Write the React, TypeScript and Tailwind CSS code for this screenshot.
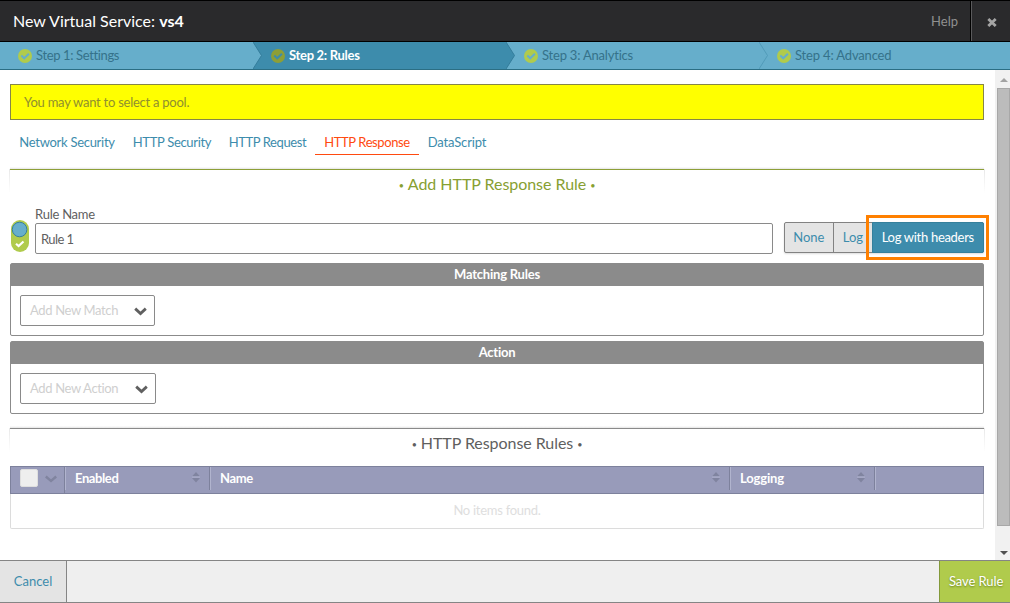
import React from "react";

const CheckBadge = ({ dim, cut }: { dim?: boolean; cut: string }) => (
  <svg width="14" height="14" viewBox="0 0 14 14" className="shrink-0">
    <circle cx="7" cy="7" r="7" fill={dim ? "#8d9f37" : "#b0cb4c"} />
    <path d="M3.3 6.5 L6.2 9.2 L10.9 4.7" fill="none" stroke={cut} strokeWidth="2.1" />
  </svg>
);

const steps = [
  { label: "Step 1: Settings", cls: "tracking-[-0.36px]" },
  { label: "Step 2: Rules", cls: "tracking-[-0.3px] text-white font-bold", active: true },
  { label: "Step 3: Analytics", cls: "tracking-[-0.2px]" },
  { label: "Step 4: Advanced", cls: "tracking-[-0.16px]" },
];

function Chevron({ fill, stroke }: { fill: string; stroke: string }) {
  return (
    <svg width="10" height="27" viewBox="0 0 10 27" className="absolute left-full top-0 z-10">
      <path d="M0 0 L8.5 13.5 L0 27 Z" fill={fill} />
      <path d="M0 0 L8.5 13.5 L0 27" fill="none" stroke={stroke} strokeWidth="1" />
    </svg>
  );
}

function SectionTitle({ children, line, text }: { children: React.ReactNode; line: string; text: string }) {
  return (
    <div className="relative h-[24px]">
      <div className="absolute -top-[2px] left-0 h-[2px] w-full bg-gradient-to-t from-[#e4e4e4] to-white" />
      <div className="absolute -left-px top-0 h-[24px] w-px bg-gradient-to-b from-[#e8e8e8] to-white" />
      <div className="absolute -right-px top-0 h-[24px] w-px bg-gradient-to-b from-[#e8e8e8] to-white" />
      <h2 className={"flex h-[24px] justify-center gap-[4px] border-t leading-[27px] whitespace-nowrap " + line + " " + text}>
        <span className="text-[9px] leading-[31px]">•</span>
        <span>{children}</span>
        <span className="text-[9px] leading-[31px]">•</span>
      </h2>
    </div>
  );
}

function Select({ label, width }: { label: string; width: string }) {
  return (
    <div className={"flex h-[31px] items-center justify-between rounded-[2px] border border-[#8a8a8a] pl-[9px] pr-[7px] text-[13px] text-[#cfcfcf] " + width}>
      <span className="whitespace-nowrap tracking-[-0.35px]">{label}</span>
      <svg width="13" height="9" viewBox="0 0 13 9" className="mt-px">
        <path d="M1.2 1.6 L6.5 6.5 L11.8 1.6" fill="none" stroke="#606060" strokeWidth="2.8" />
      </svg>
    </div>
  );
}

function Panel({ title, children }: { title: string; children: React.ReactNode }) {
  return (
    <section className="h-[73px] rounded-[2px] border border-[#8b8b8b]">
      <h3 className="h-[22px] bg-[#8b8b8b] text-center text-[13px] font-bold leading-[20px] tracking-[-0.22px] text-white">{title}</h3>
      <div className="px-[9px] pt-[9px]">{children}</div>
    </section>
  );
}

const Sort = () => (
  <svg width="8" height="11" viewBox="0 0 8 11">
    <path d="M4 0 L8 4.5 H0Z" fill="#80849f" />
    <path d="M0 6 H8 L4 10.5Z" fill="#80849f" />
    <path d="M0 5 H8" stroke="#b1b4ce" />
  </svg>
);

function HeadCell({ label, width, tracking }: { label: string; width: string; tracking: string }) {
  return (
    <div className={"flex h-[23px] shrink-0 justify-between border-l border-l-[#b1b4ce] border-r border-r-[#7d819c] pl-[9px] pr-[9px] " + width}>
      <span className={"leading-[22px] " + tracking}>{label}</span>
      <span className="pt-[5px]"><Sort /></span>
    </div>
  );
}

const tabs = [
  { label: "Network Security", cls: "w-[114px] tracking-[-0.28px] text-[#3d8cac]" },
  { label: "HTTP Security", cls: "w-[96px] tracking-[-0.32px] text-[#3d8cac]" },
  { label: "HTTP Request", cls: "w-[95px] tracking-[-0.4px] text-[#3d8cac]" },
  { label: "HTTP Response", cls: "w-[104px] border-b border-[#ff4a10] tracking-[-0.4px] text-[#ff4a10]" },
  { label: "DataScript", cls: "w-[76px] tracking-[-0.15px] text-[#3d8cac]" },
];

export default function App() {
  return (
    <div className="flex h-[603px] w-[1010px] flex-col overflow-hidden bg-white font-['Lato',sans-serif] text-[13px] text-[#5f5f5f]">
      <header className="flex h-[42px] shrink-0 border-y border-black bg-[#2a2a2c]">
        <h1 className="flex-1 whitespace-nowrap pl-[13px] text-[16px] leading-[39px] text-white">
          New Virtual Service: <b>vs4</b>
        </h1>
        <span className="pr-[12px] leading-[40px] text-[#909090]">Help</span>
        <div className="flex w-[40px] items-center justify-center border-l border-black">
          <div className="flex h-full w-full items-center justify-center border-l border-[#5a5a5c] pl-[2px] pt-[2px]">
            <svg width="10" height="9" viewBox="0 0 10 9">
              <path d="M1.3 1 L8.7 8 M8.7 1 L1.3 8" stroke="#a4a4a4" strokeWidth="2.8" />
            </svg>
          </div>
        </div>
      </header>
      <nav className="flex h-[28px] shrink-0 border-b border-[#2b6e84] bg-[#66aecb]">
        {steps.map((s, i) => (
          <div key={s.label} className={"relative flex h-[27px] w-[253px] shrink-0 items-center gap-[4px] pl-[18px] text-[#35728a] " + (s.active ? "bg-[#3d8cac]" : "bg-[#66aecb]")}>
            <CheckBadge dim={s.active} cut={s.active ? "#3d8cac" : "#66aecb"} />
            <span className={"whitespace-nowrap " + s.cls}>{s.label}</span>
            {i < 3 && <Chevron fill={s.active ? "#3d8cac" : "#66aecb"} stroke={i === 2 ? "#529bb9" : "#347d9b"} />}
          </div>
        ))}
      </nav>
      <div className="flex h-[490px] shrink-0">
        <main className="w-[995px] pl-[10px] pr-[11px] pt-[14px]">
          <div className="h-[36px] border border-[#868647] bg-[#ffff00] pl-[13px] leading-[34px] text-[#8f8f2f]">
            <span className="tracking-[-0.25px]">You may want to select a pool.</span>
          </div>
          <div className="flex h-[49px] pt-[8px]">
            {tabs.map((t) => (
              <span key={t.label} className={"h-[27px] whitespace-nowrap text-center leading-[28px] " + t.cls}>{t.label}</span>
            ))}
          </div>
          <SectionTitle line="border-[#8d9f37]" text="text-[16px] text-[#87a032] tracking-[-0.04px]">Add HTTP Response Rule</SectionTitle>
          <div className="relative flex h-[70px]">
            <div className="ml-px mt-[27px] h-[32px] w-[18px]">
              <svg width="18" height="32" viewBox="0 0 18 32">
                <rect width="18" height="32" rx="9" fill="#b0cb4c" />
                <circle cx="8.6" cy="9.5" r="7.3" fill="#66aecb" stroke="#377f9b" />
                <path d="M5 23.7 L7.6 26 L12.5 21.5" fill="none" stroke="#fff" strokeWidth="2.2" />
              </svg>
            </div>
            <div className="ml-[6px] w-[738px] pt-[13px]">
              <div className="h-[17px] leading-[17px] tracking-[-0.25px]">Rule Name</div>
              <div className="h-[31px] rounded-[2px] border border-[#8a8a8a] pl-[5px] leading-[30px] tracking-[-0.6px]">Rule 1</div>
            </div>
            <div className="ml-[11px] mt-[29px] flex h-[31px] w-[200px] rounded-[2px] border border-[#828282] bg-[#e4e4e4] leading-[28px] text-[#3d8cac] shadow-[0_1px_2px_#ddd]">
              <span className="w-[49px] border-r border-[#828282] text-center">None</span>
              <span className="w-[38px] whitespace-nowrap pl-[9px]">Log</span>
              <span className="-my-px -mr-px w-[113px] whitespace-nowrap rounded-r-[2px] border border-[#35809c] bg-[#3d8cac] text-center tracking-[-0.3px] text-white">Log with headers</span>
            </div>
            <div className="absolute left-[856px] top-[22px] h-[45px] w-[123px] border-3 border-[#ff8000]" />
          </div>
          <div className="flex flex-col gap-[5px]">
            <Panel title="Matching Rules"><Select label="Add New Match" width="w-[135px]" /></Panel>
            <Panel title="Action"><Select label="Add New Action" width="w-[136px]" /></Panel>
          </div>
          <div className="h-[14px]" />
          <SectionTitle line="border-[#8a8a8a]" text="text-[16px] text-[#5f5f5f] tracking-[-0.06px]">HTTP Response Rules</SectionTitle>
          <div className="mt-[14px] flex h-[28px] border border-[#7d819c] bg-[#989bba] font-bold text-white">
            <div className="flex h-[26px] w-[54px] shrink-0 gap-[7px] border-r border-[#7d819c] pl-[9px] pt-[2px]">
              <span className="h-[18px] w-[18px] rounded-[2px] border border-[#dedede] bg-[#eeeeee]" />
              <svg width="12" height="8" viewBox="0 0 12 8" className="mt-[6px]">
                <path d="M0.8 1.5 L6 6 L11.2 1.5" fill="none" stroke="#80849f" strokeWidth="2.4" />
              </svg>
            </div>
            <HeadCell label="Enabled" width="w-[145px]" tracking="tracking-[-0.4px]" />
            <HeadCell label="Name" width="w-[520px]" tracking="tracking-[-0.4px]" />
            <HeadCell label="Logging" width="w-[145px]" tracking="tracking-[-0.15px]" />
            <div className="h-[23px] border-l border-[#b1b4ce]" />
          </div>
          <div className="h-[35px] rounded-b-[2px] border border-t-0 border-[#dcdcdc] text-center leading-[33px] tracking-[-0.27px] text-[#dedede]">No items found.</div>
        </main>
        <aside className="flex w-[15px] flex-col items-center bg-[#f1f1f1] pl-[2px]">
          <div className="flex h-[18px] items-center pt-[2px]">
            <svg width="8" height="4" viewBox="0 0 8 4"><path d="M0 4 L4 0 L8 4Z" fill="#a3a3a3" /></svg>
          </div>
          <div className="h-[438px] w-[13px] border border-[#a8a8a8] bg-[#bcbcbc]" />
          <div className="flex flex-1 items-end pb-[5px]">
            <svg width="8" height="4" viewBox="0 0 8 4"><path d="M0 0 L4 4 L8 0Z" fill="#505050" /></svg>
          </div>
        </aside>
      </div>
      <footer className="flex h-[43px] shrink-0 justify-between border-y border-[#858585] bg-[#efefef] leading-[41px]">
        <div className="w-[67px] border-r border-[#858585] bg-[#e4e4e4] text-center text-[#3d8cac]">Cancel</div>
        <div className="w-[71px] whitespace-nowrap border-l border-[#83993a] bg-[#b0cb4c] pl-[9px] tracking-[-0.1px] text-white [text-shadow:0_1px_2px_#6d8420]">Save Rule</div>
      </footer>
    </div>
  );
}
